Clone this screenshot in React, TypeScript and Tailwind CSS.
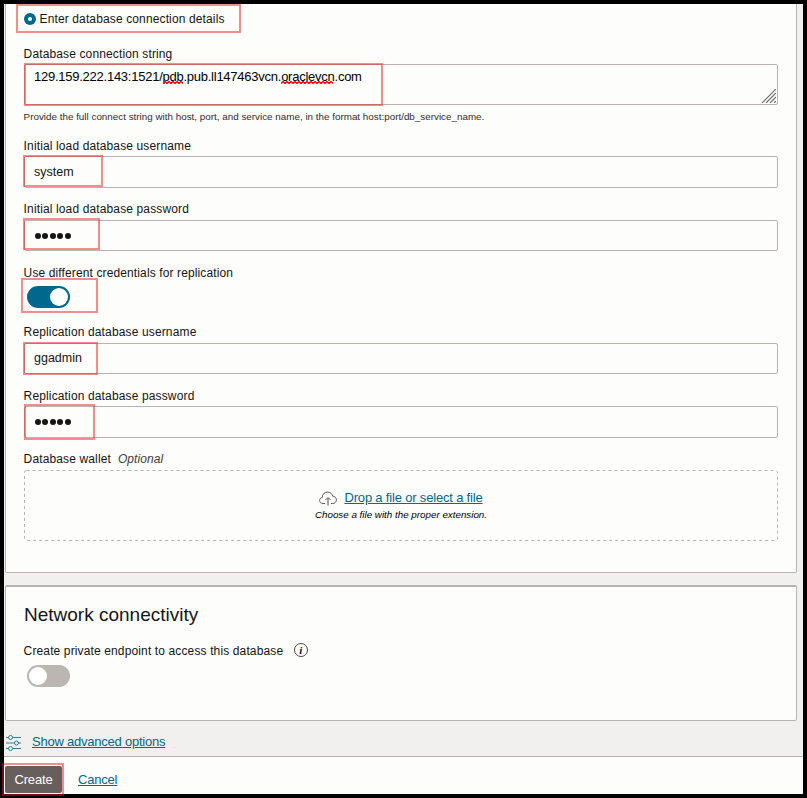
import type { ReactNode } from 'react';

function Highlight({ className }: { className: string }) {
  return <div className={`pointer-events-none absolute border-2 border-[#e61e1e]/50 ${className}`} />;
}

function Label({ children, className = '' }: { children: ReactNode; className?: string }) {
  return <div className={`flex h-4 items-center whitespace-nowrap text-[12px] leading-4 ${className}`}>{children}</div>;
}

function Box({ children, className }: { children: ReactNode; className: string }) {
  return <div className={`relative w-[754px] rounded-[2px] border border-[#b8b3ae] pl-[9px] ${className}`}>{children}</div>;
}

function Dots() {
  return (
    <div className="flex gap-[1.6px] pl-[0.5px]">
      {[0, 1, 2, 3, 4].map((i) => (
        <span key={i} className="size-[6px] rounded-full bg-[#161513]" />
      ))}
    </div>
  );
}

function Misspelled({ children, width }: { children: string; width: number }) {
  const points = Array.from({ length: Math.floor(width / 2) + 1 }, (_, i) => `${i * 2},${i % 2 ? 0.5 : 2.5}`).join(' ');
  return (
    <span className="relative">
      {children}
      <svg className="absolute bottom-0 left-0" width={width} height="3">
        <polyline points={points} fill="none" stroke="#ff0000" strokeWidth="1.4" />
      </svg>
    </span>
  );
}

export default function App() {
  return (
    <div className="relative flex h-[798px] w-[807px] flex-col overflow-hidden border-4 border-black bg-[#f2f0ef] font-['Liberation_Sans',Arial,sans-serif] text-[12px] text-[#161513]">
      <div className="ml-px flex h-[569px] w-[792px] shrink-0 flex-col rounded-b-[2px] border border-t-0 border-[#b8b3ae] bg-[#fdfdfc] pl-[18px]">
        <div className="mt-[7px] flex h-4 items-center">
          <span className="flex size-3 items-center justify-center rounded-full bg-[#00688c]">
            <span className="size-1 rounded-full bg-white" />
          </span>
          <span className="ml-[3.5px] tracking-[0.13px]">Enter database connection details</span>
        </div>
        <Label className="mt-[19px]"><span className="-ml-[0.4px] tracking-[0.13px]">Database connection string</span></Label>
        <Box className="mt-[2px] h-[41px] pt-[4px] leading-4">
          <span className="text-[13px] tracking-[-0.25px] text-black">
            129.159.222.143:1521/<Misspelled width={21}>pdb</Misspelled>.pub.ll147463vcn.<Misspelled width={53}>oraclevcn</Misspelled>.com
          </span>
          <svg className="absolute bottom-px right-px" width="14" height="14" stroke="#70706f" strokeWidth="1.2">
            <path d="M0 14 14 0M4 14 14 4M8 14 14 8M12 14 14 12" />
          </svg>
        </Box>
        <div className="-ml-[0.4px] mt-[6px] h-3 text-[9.85px] leading-3 text-[#312d2a]">
          Provide the full connect string with host, port, and service name, in the format host:port/db_service_name.
        </div>
        <Label className="mt-[15px]"><span className="-ml-[0.4px] tracking-[0.13px]">Initial load database username</span></Label>
        <Box className="mt-[2px] flex h-8 items-center"><span className="text-[12.5px]">system</span></Box>
        <Label className="mt-[13px]"><span className="-ml-[0.4px] tracking-[0.13px]">Initial load database password</span></Label>
        <Box className="mt-[3px] flex h-[31px] items-center pt-[1px]"><Dots /></Box>
        <Label className="mt-[14px]"><span className="-ml-[0.4px] tracking-[0.12px]">Use different credentials for replication</span></Label>
        <div className="ml-[3px] mt-[5px] flex h-[22px] w-[43px] items-center justify-end rounded-full bg-[#00688c] pr-[2px]">
          <span className="size-[18px] rounded-full bg-white" />
        </div>
        <Label className="mt-[16px]"><span className="-ml-[0.4px] tracking-[0.14px]">Replication database username</span></Label>
        <Box className="mt-[3px] flex h-[31px] items-center"><span className="text-[12.5px]">ggadmin</span></Box>
        <Label className="mt-[14px]"><span className="-ml-[0.4px] tracking-[0.14px]">Replication database password</span></Label>
        <Box className="mt-[2px] flex h-8 items-center"><Dots /></Box>
        <Label className="mt-[13px]">
          <span className="-ml-[0.4px] tracking-[0.13px]">Database wallet</span>
          <span className="ml-[7px] tracking-[0.08px] italic text-[#403c38]">Optional</span>
        </Label>
        <div className="relative mt-[3px] flex h-[71px] w-[754px] flex-col items-center pt-[20px]">
          <svg className="absolute inset-0" width="754" height="71">
            <rect x="0.5" y="0.5" width="753" height="70" rx="2" fill="none" stroke="#b8b3ae" strokeDasharray="3 3" />
          </svg>
          <div className="flex h-4 items-center">
            <svg className="mt-px" width="18" height="15" viewBox="0 0 18 15" fill="none" stroke="#5b5652">
              <path d="M6 12.5H3.8C1.9 12.5.6 11.2.6 9.5c0-1.6 1-2.8 2.6-3C3.4 3.2 5.6 1 8.6 1c2.5 0 4.5 1.6 5 4.1 2.2.1 3.8 1.6 3.8 3.7s-1.6 3.7-3.7 3.7H12M9 14.5V6.7M6.5 9 9 6.5 11.5 9" />
            </svg>
            <span className="ml-[7px] text-[13px] tracking-[-0.18px] text-[#00688c] underline">Drop a file or select a file</span>
          </div>
          <div className="mt-[3px] text-[9.8px] italic leading-3 text-black">Choose a file with the proper extension.</div>
        </div>
      </div>
      <div className="ml-px mt-3 h-[136px] w-[792px] shrink-0 rounded-[2px] border border-t-2 border-[#b8b3ae] bg-[#fdfdfc] pl-[18px]">
        <div className="mt-[16px] h-6 text-[19px] leading-6">Network connectivity</div>
        <div className="mt-4 flex h-4 items-center">
          <span className="-ml-[0.4px] tracking-[0.13px]">Create private endpoint to access this database</span>
          <span className="mb-[2px] ml-[10.5px] flex size-[14px] items-center justify-center rounded-full border border-[#4a4642] font-['Liberation_Serif',serif] text-[11px] font-bold italic leading-none">i</span>
        </div>
        <div className="ml-[3px] mt-[6px] flex h-[22px] w-[43px] items-center rounded-full bg-[#bcb6b1] pl-[2px]">
          <span className="size-[18px] rounded-full bg-white" />
        </div>
      </div>
      <div className="flex h-[35px] shrink-0 items-center pl-[2px] pt-[7px] text-[#00688c]">
        <svg className="mt-px" width="16" height="16" viewBox="0 0 16 16" fill="none" stroke="#2b80a0">
          <path d="M0 2.5h2.5m4 0H15M0 8h8.5m4 0H15M0 13.5h2.5m4 0H15" />
          <circle cx="4.5" cy="2.5" r="2" /><circle cx="10.5" cy="8" r="2" /><circle cx="4.5" cy="13.5" r="2" />
        </svg>
        <span className="ml-[10px] text-[13px] tracking-[-0.23px] underline">Show advanced options</span>
      </div>
      <div className="flex h-[38px] shrink-0 border-t border-[#b8b3ae] bg-[#fdfdfc] pl-px pt-[9px]">
        <div className="flex h-[27px] w-[57px] items-center justify-center rounded-[2px] bg-[#665f5b] text-[13px] tracking-[-0.15px] text-white">Create</div>
        <span className="ml-4 mt-[6px] text-[13px] leading-4 tracking-[-0.2px] text-[#00688c] underline">Cancel</span>
      </div>
      <div className="pointer-events-none absolute -left-1 -top-1 h-0 w-0">
        <Highlight className="left-[16px] top-[4px] h-[29px] w-[225px]" />
        <Highlight className="left-[24px] top-[63px] h-[43px] w-[359px]" />
        <Highlight className="left-[23px] top-[155px] h-[32px] w-[80px]" />
        <Highlight className="left-[23px] top-[218px] h-[32px] w-[77px]" />
        <Highlight className="left-[21px] top-[278px] h-[35px] w-[77px]" />
        <Highlight className="left-[23px] top-[342px] h-[33px] w-[75px]" />
        <Highlight className="left-[24px] top-[404px] h-[36px] w-[71px]" />
      </div>
      <div className="pointer-events-none fixed left-[2px] top-[763px] h-[33px] w-[62px] border-2 border-[#e61e1e]/50" />
    </div>
  );
}
